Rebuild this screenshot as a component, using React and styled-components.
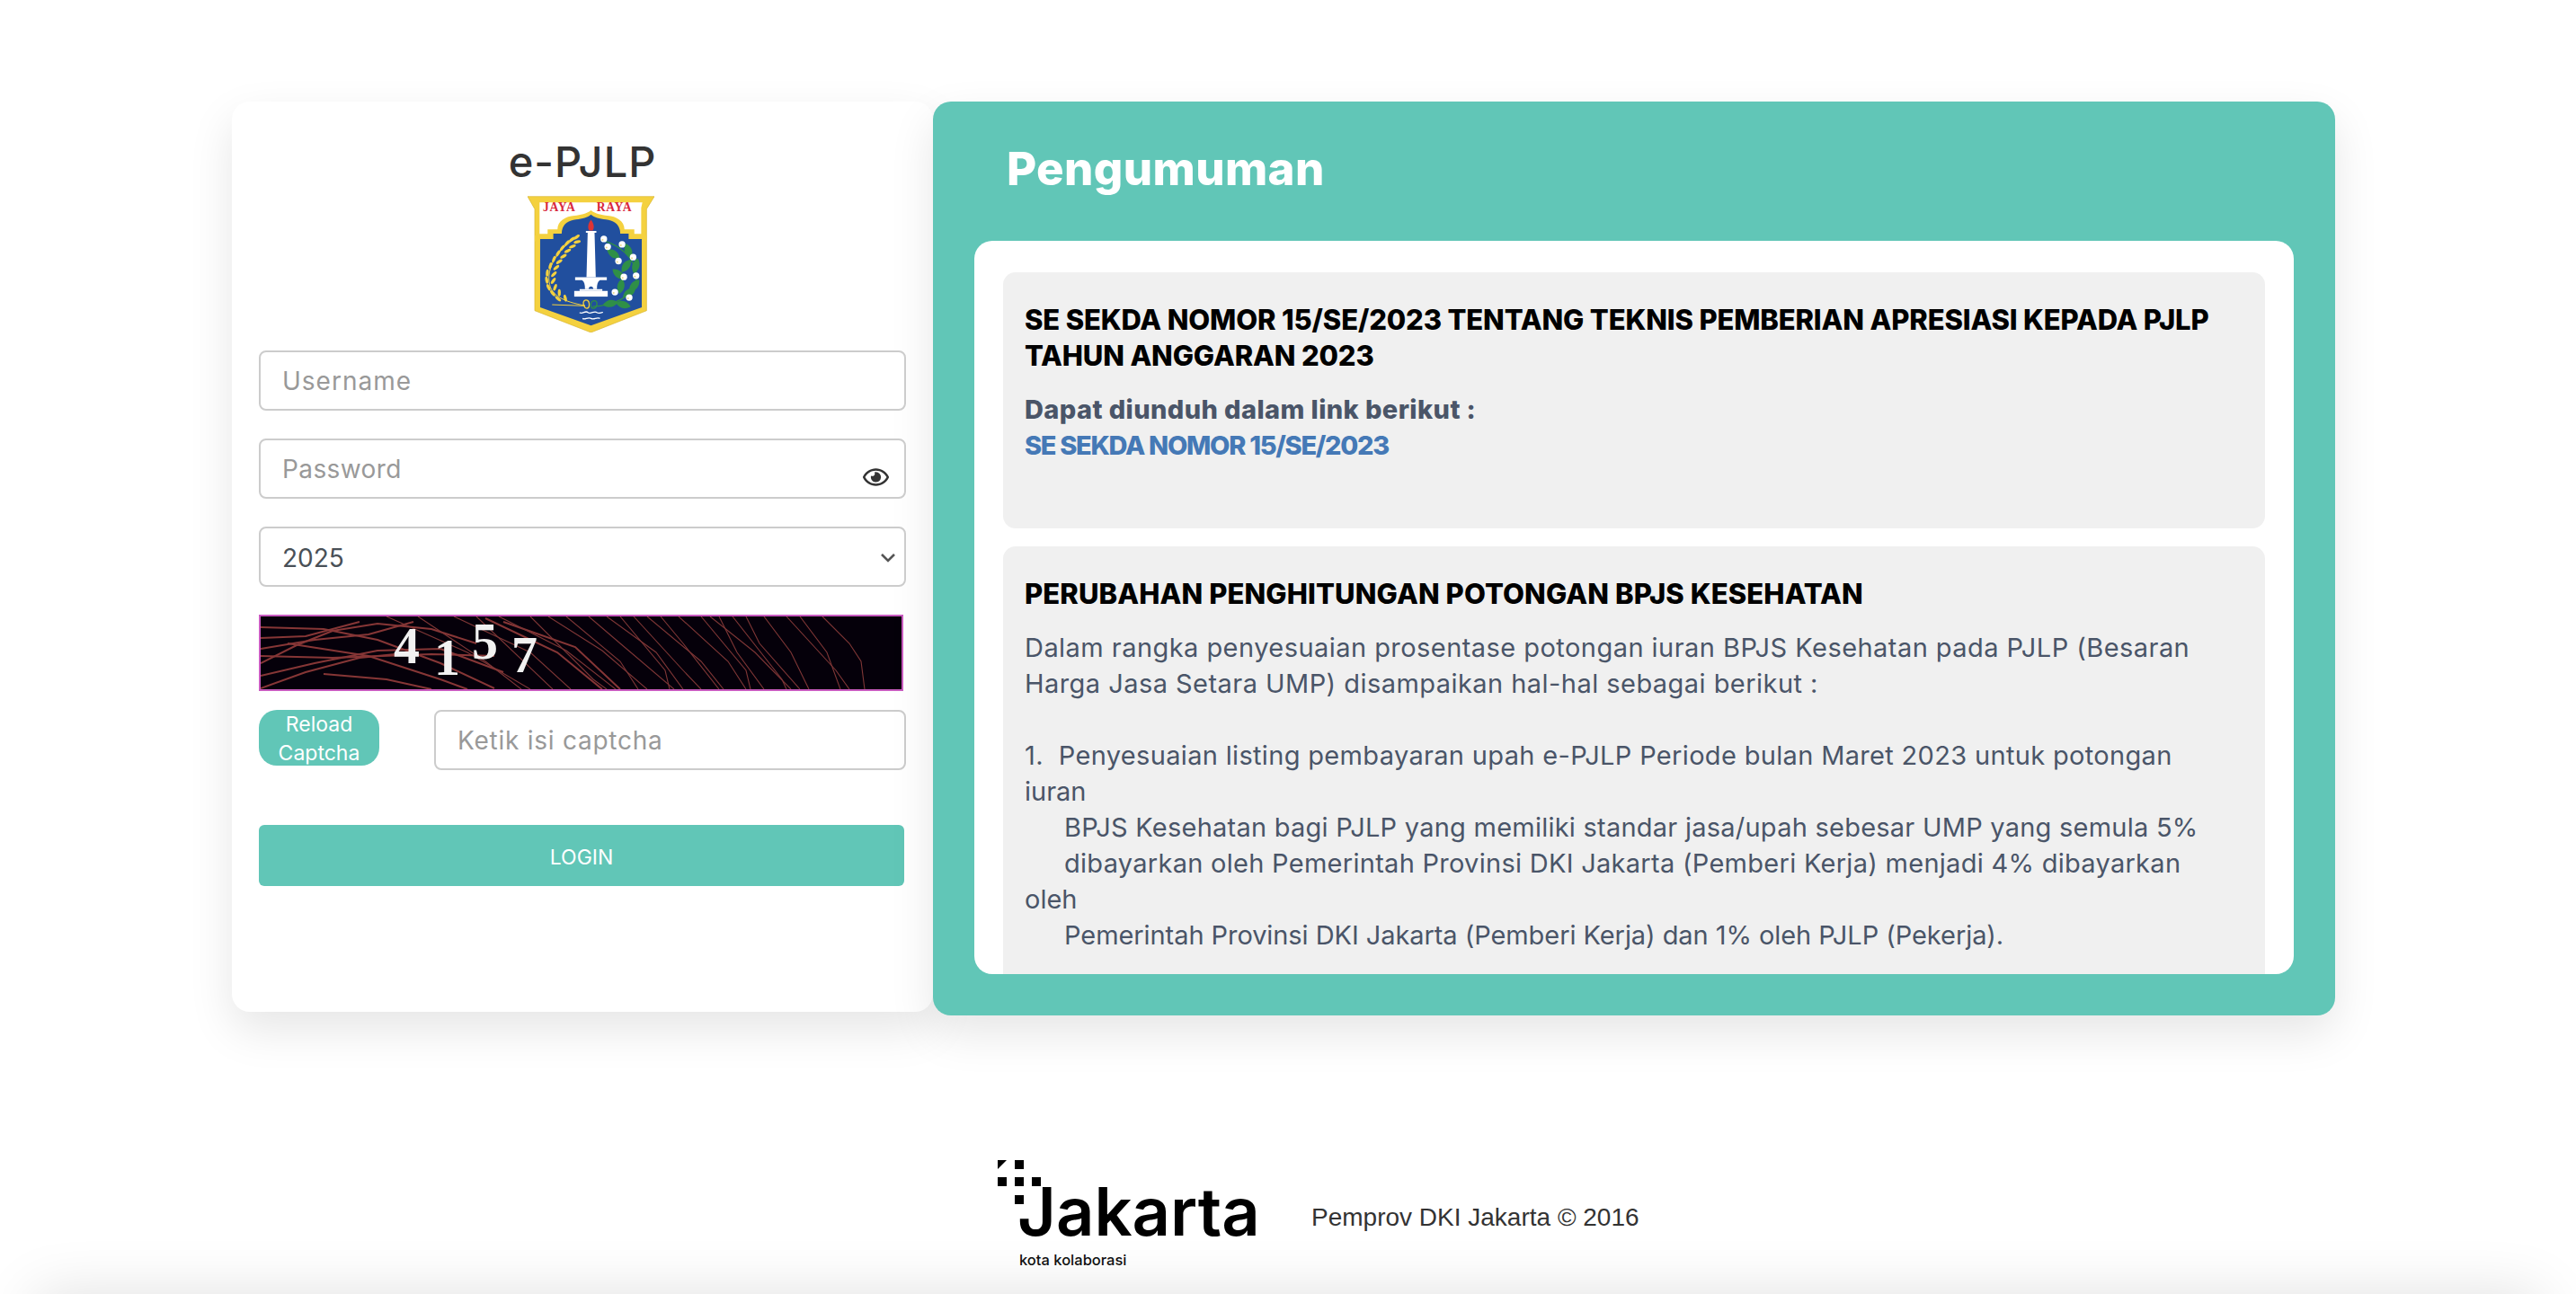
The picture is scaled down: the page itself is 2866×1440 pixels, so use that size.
import React from "react";
import styled, { createGlobalStyle } from "styled-components";
import { FaRegEye } from "react-icons/fa";

const GlobalStyle = createGlobalStyle`
  html, body {
    margin: 0;
    padding: 0;
    background: #fff;
    overflow: hidden;
  }
  * {
    box-sizing: border-box;
  }
`;

const FONT = `Inter, "Noto Sans", sans-serif`;

const Page = styled.div`
  width: 2866px;
  height: 1440px;
  position: relative;
  overflow: hidden;
  display: flex;
  flex-direction: column;
  font-family: ${FONT};
`;

const Main = styled.main`
  display: flex;
  align-items: flex-start;
  padding: 113px 0 0 258px;
`;

const LoginCard = styled.section`
  width: 780px;
  height: 1013px;
  padding: 47px 30px 0;
  background: #fff;
  border-radius: 20px;
  box-shadow: 0 20px 50px rgba(0, 0, 0, 0.1);
`;

const Title = styled.h1`
  margin: 0;
  height: 58px;
  padding-right: 0;
  text-align: center;
  font-size: 47px;
  line-height: 40px;
  font-weight: 500;
  letter-spacing: 1px;
  color: #333;
`;

const CrestWrap = styled.div`
  display: flex;
  justify-content: center;
  padding-left: 18px;
  margin-bottom: 20px;
  svg {
    display: block;
  }
`;

const Field = styled.div`
  position: relative;
  width: 720px;
  margin-bottom: 31px;
`;

const TextInput = styled.input`
  display: block;
  width: 100%;
  height: 67px;
  padding: 0 24px;
  border: 2px solid #ccc;
  border-radius: 8px;
  background: #fff;
  font-family: ${FONT};
  font-size: 28px;
  letter-spacing: ${(p) => p.$spacing || 0}px;
  color: #495057;
  outline: none;
  &::placeholder {
    color: #999;
    opacity: 1;
  }
`;

const EyeIcon = styled(FaRegEye)`
  position: absolute;
  right: 19px;
  top: 30px;
  width: 29px;
  height: 26px;
  color: #333;
`;

const SelectInput = styled.select`
  display: block;
  width: 100%;
  height: 67px;
  padding: 2px 24px 0;
  border: 2px solid #ccc;
  border-radius: 8px;
  background: #fff;
  appearance: none;
  font-family: ${FONT};
  font-size: 28px;
  color: #495057;
  outline: none;
`;

const Chevron = styled.svg`
  position: absolute;
  right: 11px;
  top: 29px;
  width: 18px;
  height: 12px;
`;

const CaptchaImage = styled.div`
  width: 717px;
  height: 85px;
  margin-bottom: 21px;
  background: #05000a;
  border: 2px solid #c95cc0;
  overflow: hidden;
  svg {
    display: block;
  }
`;

const CaptchaRow = styled.div`
  display: flex;
  align-items: flex-start;
  gap: 61px;
  margin-bottom: 61px;
`;

const ReloadButton = styled.button`
  width: 134px;
  height: 62px;
  padding: 0;
  border: 0;
  border-radius: 20px;
  background: #61c6b7;
  color: #fff;
  font-family: ${FONT};
  font-size: 23px;
  line-height: 32px;
`;

const CaptchaInput = styled(TextInput)`
  width: 525px;
`;

const LoginButton = styled.button`
  display: block;
  width: 718px;
  height: 68px;
  padding: 3px 0 0;
  border: 0;
  border-radius: 6px;
  background: #61c6b7;
  color: #fff;
  font-family: ${FONT};
  font-size: 23px;
  text-transform: uppercase;
`;

const NoticePanel = styled.section`
  width: 1560px;
  height: 1017px;
  padding: 0 46px 46px;
  display: flex;
  flex-direction: column;
  background: #61c6b7;
  border-radius: 20px;
  box-shadow: 0 20px 50px rgba(0, 0, 0, 0.1);
`;

const NoticeTitle = styled.h2`
  margin: 0;
  height: 155px;
  padding: 45px 0 0 36px;
  font-size: 51px;
  line-height: 60px;
  font-weight: 800;
  letter-spacing: 0.35px;
  color: #fff;
`;

const NoticeScroll = styled.div`
  flex: 1;
  min-height: 0;
  padding: 35px 32px 0;
  background: #fff;
  border-radius: 20px;
  overflow: hidden;
`;

const NoticeItem = styled.article`
  min-height: ${(p) => p.$minHeight || 0}px;
  margin-bottom: 20px;
  padding: 33px 24px 60px;
  background: #f0f0f0;
  border-radius: 14px;
`;

const ItemHeading = styled.h3`
  margin: 0 0 20px;
  font-size: 31px;
  line-height: 40px;
  font-weight: 800;
  letter-spacing: ${(p) => p.$spacing || 0}px;
  color: #000;
  white-space: nowrap;
`;

const ItemLine = styled.p`
  margin: 0;
  padding-left: ${(p) => (p.$indent ? 44 : 0)}px;
  min-height: 40px;
  font-size: 29px;
  line-height: 40px;
  font-weight: ${(p) => p.$weight || 400};
  letter-spacing: ${(p) => p.$spacing || 0}px;
  color: #4a5568;
  white-space: nowrap;
`;

const ItemLink = styled.a`
  display: block;
  font-size: 29px;
  line-height: 40px;
  font-weight: 800;
  letter-spacing: -1.3px;
  color: #4579b6;
  text-decoration: none;
`;

const Footer = styled.footer`
  display: flex;
  align-items: flex-start;
  padding: 161px 0 0 1110px;
`;

const Logo = styled.div`
  position: relative;
  width: 290px;
  height: 130px;
`;

const LogoDots = styled.svg`
  position: absolute;
  left: 0;
  top: 0;
  width: 50px;
  height: 50px;
`;

const LogoWord = styled.span`
  position: absolute;
  left: 22px;
  top: 17px;
  font-size: 74px;
  line-height: 80px;
  font-weight: 600;
  color: #000;
`;

const LogoTag = styled.span`
  position: absolute;
  left: 24px;
  top: 101px;
  font-size: 16.5px;
  line-height: 20px;
  font-weight: 500;
  color: #111;
`;

const Copyright = styled.p`
  margin: 48px 0 0 59px;
  font-family: "Liberation Sans", Arial, sans-serif;
  font-size: 28px;
  line-height: 32px;
  color: #333;
`;

const BottomShade = styled.div`
  position: absolute;
  left: 40px;
  right: 40px;
  bottom: -70px;
  height: 70px;
  background: #fff;
  box-shadow: 0 0 65px rgba(0, 0, 0, 0.125);
`;

const announcementLines = [
  { text: "Dalam rangka penyesuaian prosentase potongan iuran BPJS Kesehatan pada PJLP (Besaran", spacing: 0.45 },
  { text: "Harga Jasa Setara UMP) disampaikan hal-hal sebagai berikut :", spacing: 0.45 },
  { text: "" },
  { text: "1.\u00a0\u00a0Penyesuaian listing pembayaran upah e-PJLP Periode bulan Maret 2023 untuk potongan", spacing: 0.33 },
  { text: "iuran" },
  { text: "BPJS Kesehatan bagi PJLP yang memiliki standar jasa/upah sebesar UMP yang semula 5%", indent: true, spacing: 0.24 },
  { text: "dibayarkan oleh Pemerintah Provinsi DKI Jakarta (Pemberi Kerja) menjadi 4% dibayarkan", indent: true, spacing: 0.28 },
  { text: "oleh" },
  { text: "Pemerintah Provinsi DKI Jakarta (Pemberi Kerja) dan 1% oleh PJLP (Pekerja).", indent: true, spacing: -0.07 },
];

// wheat grains along the left branch of the crest: x, y, rotation
const grains = [
  [212, 176, -35], [196, 184, -40], [214, 192, -15], [180, 196, -50], [198, 207, -20],
  [164, 212, -55], [182, 222, -25], [150, 230, -60], [168, 240, -30], [136, 250, -70],
  [154, 258, -35], [124, 272, -75], [144, 278, -40], [114, 296, -85], [136, 300, -45],
  [112, 320, 80], [134, 322, -55], [118, 344, 65], [140, 344, -70], [132, 364, 50],
  [154, 362, 90], [150, 382, 40], [174, 380, 75],
];

const leaves = [
  [335, 232, 35], [385, 222, 70], [378, 272, -55], [410, 272, -75], [352, 300, 40],
  [405, 338, -50], [360, 340, -80], [368, 402, 15], [325, 398, -10], [388, 362, -35],
];

const flowers = [
  [303, 182], [316, 208], [364, 200], [401, 243], [352, 256],
  [370, 309], [411, 305], [340, 360], [388, 378],
];

function Crest() {
  return (
    <svg width="141" height="152" viewBox="48 38 424 457">
      <path d="M48 40H472L446 82V422L260 495L72 422V82Z" fill="#f4d13f" stroke="#d8b52f" strokeWidth="2" />
      <path d="M88 60H432L428 78V165H88V78Z" fill="#fff" />
      <text x="99" y="90" fontFamily="Liberation Serif" fontWeight="700" fontSize="41" fill="#d8283c" letterSpacing="2">JAYA</text>
      <text x="279" y="90" fontFamily="Liberation Serif" fontWeight="700" fontSize="41" fill="#d8283c" letterSpacing="2">RAYA</text>
      <path d="M72 170H115V150H148C148 122 175 106 205 104C225 102 245 98 260 86C275 98 295 102 315 104C345 106 372 122 372 150H405V170H446V190H72Z" fill="#f4d13f" />
      <path d="M90 182H134V164H162C162 135 182 120 210 117C232 114 248 110 260 100C272 110 288 114 310 117C338 120 358 135 358 164H386V182H430V411L260 472L90 411Z" fill="#214f9e" />
      <path d="M260 118C270 130 272 145 266 154H254C248 145 250 130 260 118Z" fill="#dd3434" />
      <path d="M243 155H278V161H272L276 310H245L249 161H243Z" fill="#fff" />
      <path d="M207 310H313V320H290C282 325 280 335 280 350H240C240 335 238 325 230 320H207Z" fill="#fff" />
      <path d="M252 350C252 338 268 338 268 350Z" fill="#214f9e" />
      <rect x="222" y="350" width="76" height="6" fill="#fff" />
      <rect x="204" y="356" width="112" height="19" fill="#fff" />
      <path d="M215 175C150 215 108 280 122 335C128 368 165 392 240 405" fill="none" stroke="#f4d13f" strokeWidth="3" />
      {grains.map(([x, y, r]) => (
        <ellipse key={`${x}-${y}`} cx={x} cy={y} rx="12" ry="5" fill="#f4d13f" transform={`rotate(${r} ${x} ${y})`} />
      ))}
      <path d="M130 402L240 406" stroke="#f4d13f" strokeWidth="3" />
      <path d="M238 408C225 385 252 378 254 398C256 420 240 415 238 408Z" fill="none" stroke="#f4d13f" strokeWidth="4" />
      <path d="M310 190C370 210 425 265 410 330C398 375 335 405 266 408" fill="none" stroke="#2f8f47" strokeWidth="4" />
      <path d="M262 412C250 388 282 380 280 400C278 416 268 416 262 412Z" fill="none" stroke="#2f8f47" strokeWidth="4" />
      {leaves.map(([x, y, r]) => (
        <path
          key={`${x}-${y}`}
          d={`M${x - 26} ${y}C${x - 10} ${y - 16} ${x + 10} ${y - 16} ${x + 26} ${y}C${x + 10} ${y + 16} ${x - 10} ${y + 16} ${x - 26} ${y}Z`}
          fill="#2f8f47"
          transform={`rotate(${r} ${x} ${y})`}
        />
      ))}
      {flowers.map(([x, y]) => (
        <g key={`${x}-${y}`}>
          <circle cx={x} cy={y} r="11" fill="#fff" />
          <circle cx={x - 4} cy={y + 3} r="3" fill="#e8d98a" />
        </g>
      ))}
      <path d="M222 428C232 436 240 420 250 428C260 436 270 420 280 428C288 434 294 426 300 428" fill="none" stroke="#fff" strokeWidth="4" />
      <path d="M232 448C240 454 250 442 260 448C270 454 280 442 290 448" fill="none" stroke="#fff" strokeWidth="4" />
    </svg>
  );
}

// noise of the captcha: thick curves sit on the left, thin strokes fan out to the right
const thickLines = [
  "M0 52L40 32L80 16L130 8L190 14L240 30",
  "M0 36L60 26L120 20L170 6",
  "M0 44L80 46L190 42L260 44",
  "M0 66L60 52L130 38L200 36L270 62",
  "M0 80L50 62L110 46L170 40",
  "M0 12L70 14L130 26L200 52L260 80",
  "M30 30L120 44L200 70L230 81",
  "M0 24L50 22L110 6",
  "M70 64L140 70L190 81",
  "M250 2L330 40L380 81",
  "M270 6L350 34L400 81",
];

const thinLines = [
  "M140 0L230 40L300 81", "M175 0L250 50L290 81", "M215 0L300 40L345 81", "M240 0L325 81",
  "M265 0L340 38L395 81", "M300 0L370 70L385 81", "M320 0L380 38L430 81", "M340 0L400 50L420 81",
  "M365 0L400 30L460 81", "M385 0L440 40L470 81", "M400 0L450 60L455 81", "M430 0L490 50L515 81",
  "M445 0L470 30L510 81", "M465 0L520 50L540 81", "M490 0L540 60L545 81", "M500 0L550 40L590 81",
  "M525 0L580 70L585 81", "M540 0L555 30L600 81", "M560 0L590 40L610 81", "M585 0L640 60L655 81",
  "M600 0L630 40L645 81", "M625 0L655 30L668 50L672 81", "M510 0L530 40L560 81", "M415 0L470 60L490 81",
];

function Captcha() {
  return (
    <svg width="713" height="81" viewBox="0 0 713 81">
      {thickLines.map((d) => (
        <path key={d} d={d} fill="none" stroke="#863636" strokeWidth="2" />
      ))}
      {thinLines.map((d) => (
        <path key={d} d={d} fill="none" stroke="#7f3636" strokeWidth="1.1" />
      ))}
      <g fontFamily="Liberation Serif" fontWeight="700" fill="#f1f1f1">
        <text x="148" y="52" fontSize="58">4</text>
        <text x="193" y="65" fontSize="58">1</text>
        <text x="235" y="47" fontSize="58">5</text>
        <text x="279" y="62" fontSize="58">7</text>
      </g>
    </svg>
  );
}

export default function App() {
  return (
    <Page>
      <GlobalStyle />
      <Main>
        <LoginCard>
          <Title>e-PJLP</Title>
          <CrestWrap>
            <Crest />
          </CrestWrap>
          <Field>
            <TextInput placeholder="Username" $spacing={1} />
          </Field>
          <Field>
            <TextInput placeholder="Password" $spacing={0.4} />
            <EyeIcon />
          </Field>
          <Field>
            <SelectInput defaultValue="2025">
              <option>2025</option>
            </SelectInput>
            <Chevron viewBox="0 0 18 12">
              <path d="M2 2L9 9L16 2" fill="none" stroke="#555" strokeWidth="2.6" />
            </Chevron>
          </Field>
          <CaptchaImage>
            <Captcha />
          </CaptchaImage>
          <CaptchaRow>
            <ReloadButton>
              Reload
              <br />
              Captcha
            </ReloadButton>
            <CaptchaInput placeholder="Ketik isi captcha" $spacing={0.75} />
          </CaptchaRow>
          <LoginButton>Login</LoginButton>
        </LoginCard>
        <NoticePanel>
          <NoticeTitle>Pengumuman</NoticeTitle>
          <NoticeScroll>
            <NoticeItem $minHeight={285}>
              <ItemHeading $spacing={-0.15}>
                SE SEKDA NOMOR 15/SE/2023 TENTANG TEKNIS PEMBERIAN APRESIASI KEPADA PJLP
                <br />
                TAHUN ANGGARAN 2023
              </ItemHeading>
              <ItemLine $weight={800} $spacing={0.4}>
                Dapat diunduh dalam link berikut :
              </ItemLine>
              <ItemLink href="#">SE SEKDA NOMOR 15/SE/2023</ItemLink>
            </NoticeItem>
            <NoticeItem>
              <ItemHeading $spacing={0.1}>PERUBAHAN PENGHITUNGAN POTONGAN BPJS KESEHATAN</ItemHeading>
              {announcementLines.map((line, i) => (
                <ItemLine key={i} $indent={line.indent} $spacing={line.spacing}>
                  {line.text}
                </ItemLine>
              ))}
            </NoticeItem>
          </NoticeScroll>
        </NoticePanel>
      </Main>
      <Footer>
        <Logo>
          <LogoDots viewBox="0 0 50 50">
            <path d="M0 0H10L0 10Z" fill="#000" />
            <rect x="19" y="0" width="10" height="10" fill="#000" />
            <rect x="0" y="19" width="10" height="10" fill="#000" />
            <rect x="19" y="19" width="10" height="10" fill="#000" />
            <rect x="38" y="19" width="10" height="10" fill="#000" />
            <rect x="19" y="39" width="10" height="10" fill="#000" />
          </LogoDots>
          <LogoWord>Jakarta</LogoWord>
          <LogoTag>kota kolaborasi</LogoTag>
        </Logo>
        <Copyright>Pemprov DKI Jakarta © 2016</Copyright>
      </Footer>
      <BottomShade />
    </Page>
  );
}
